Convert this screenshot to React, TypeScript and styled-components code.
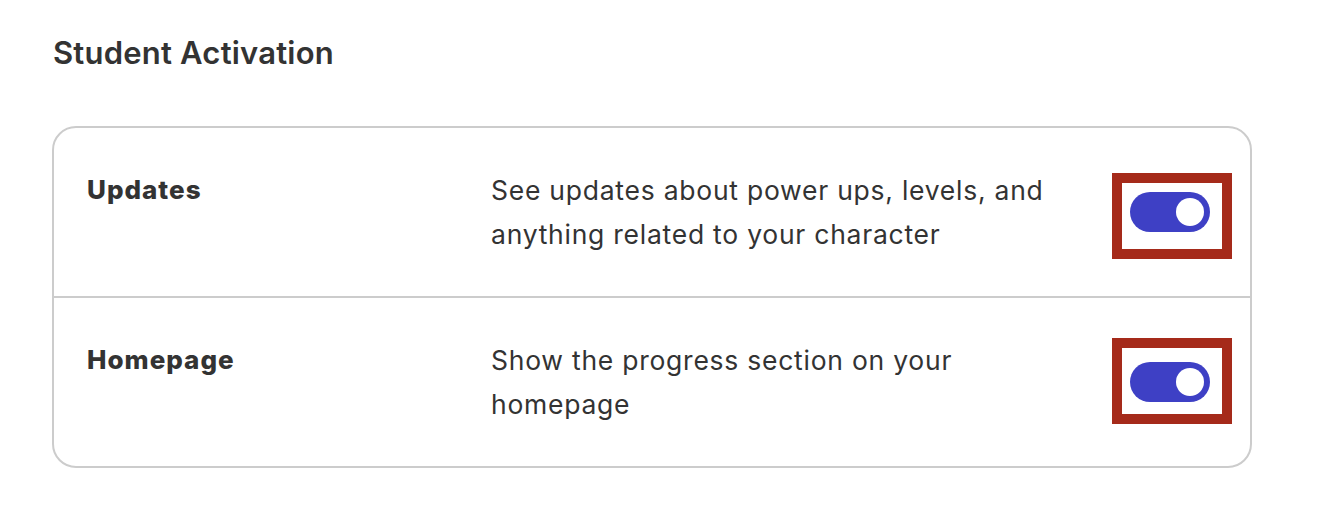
import { useState } from 'react';
import styled, { createGlobalStyle } from 'styled-components';

const GlobalStyle = createGlobalStyle`
  body {
    margin: 0;
    background: #fff;
    font-family: 'Inter', 'Liberation Sans', sans-serif;
    color: #333;
  }
`;

const Page = styled.div`
  padding: 34px 0 0 52px;
  width: 1200px;
`;

const Title = styled.h2`
  margin: 0 0 54px 1px;
  font-size: 31px;
  line-height: 38px;
  font-weight: 600;
  letter-spacing: 0.2px;
  color: #333;
`;

const Card = styled.div`
  border: 2px solid #cccccc;
  border-radius: 24px;
  overflow: hidden;
`;

const Row = styled.div<{ $last?: boolean }>`
  display: grid;
  grid-template-columns: 404px 570px 1fr;
  align-items: start;
  padding: 40px 40px 40px 33px;
  border-bottom: ${(p) => (p.$last ? 'none' : '2px solid #cccccc')};
`;

const Label = styled.div`
  font-size: 26px;
  font-weight: 800;
  letter-spacing: 1px;
  line-height: 44px;
  color: #333;
`;

const Description = styled.p`
  margin: 0;
  font-size: 26.5px;
  letter-spacing: 0.75px;
  line-height: 44px;
  color: #333;
`;

const ToggleCell = styled.div`
  justify-self: end;
  align-self: center;
  position: relative;
  display: flex;
`;

// annotation frame drawn over the switch
const Highlight = styled.div<{ $top: number; $bottom: number }>`
  position: absolute;
  left: -18px;
  right: -22px;
  top: ${(p) => -p.$top}px;
  bottom: ${(p) => -p.$bottom}px;
  border: 10px solid #a52a1a;
  pointer-events: none;
`;

const Switch = styled.button<{ $on: boolean }>`
  width: 80px;
  height: 40px;
  border: none;
  border-radius: 20px;
  padding: 0 6px;
  background: ${(p) => (p.$on ? '#3e40c5' : '#c4c4c4')};
  display: flex;
  align-items: center;
  justify-content: ${(p) => (p.$on ? 'flex-end' : 'flex-start')};
  cursor: pointer;
`;

const Knob = styled.span`
  width: 28px;
  height: 28px;
  border-radius: 50%;
  background: #fff;
`;

const settings = [
  {
    key: 'updates',
    label: 'Updates',
    text: 'See updates about power ups, levels, and anything related to your character',
    frame: { top: 19, bottom: 27 },
  },
  {
    key: 'homepage',
    label: 'Homepage',
    text: 'Show the progress section on your homepage',
    frame: { top: 24, bottom: 22 },
  },
];

const App = () => {
  const [state, setState] = useState<Record<string, boolean>>({ updates: true, homepage: true });

  return (
    <Page>
      <GlobalStyle />
      <Title>Student Activation</Title>
      <Card>
        {settings.map((s, i) => (
          <Row key={s.key} $last={i === settings.length - 1}>
            <Label>{s.label}</Label>
            <Description>{s.text}</Description>
            <ToggleCell>
              <Switch
                $on={state[s.key]}
                aria-label={s.label}
                onClick={() => setState({ ...state, [s.key]: !state[s.key] })}
              >
                <Knob />
              </Switch>
              <Highlight $top={s.frame.top} $bottom={s.frame.bottom} />
            </ToggleCell>
          </Row>
        ))}
      </Card>
    </Page>
  );
};

export default App;
